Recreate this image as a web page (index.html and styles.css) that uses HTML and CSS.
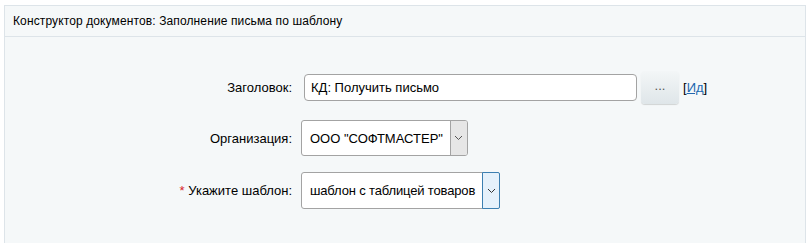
FILE: index.html
```html
<!DOCTYPE html>
<html>
<head>
  <meta charset="UTF-8">
  <title>Конструктор документов</title>
  <link rel="stylesheet" href="styles.css">
</head>
<body>
<div class="panel">
  <div class="panel-head">Конструктор документов: Заполнение письма по шаблону</div>

  <div class="panel-body">
    <div class="form">
      <label class="label">Заголовок:</label>
      <div class="field">
        <input type="text" class="text-input" value="КД: Получить письмо" />
        <button class="dots">...</button>
        <span class="id-link">[<a href="#">Ид</a>]</span>
      </div>

      <label class="label">Организация:</label>
      <div class="field">
        <div class="select">
          <span class="select-value">ООО "СОФТМАСТЕР"</span>
          <span class="select-arrow">
            <svg width="9" height="6" viewBox="0 0 9 6"><path d="M1 1 L4.5 4.5 L8 1" fill="none" stroke="#555" stroke-width="1"/></svg>
          </span>
        </div>
      </div>

      <label class="label"><span class="req">*</span> Укажите шаблон:</label>
      <div class="field">
        <div class="select active">
          <span class="select-value">шаблон с таблицей товаров</span>
          <span class="select-arrow">
            <svg width="9" height="6" viewBox="0 0 9 6"><path d="M1 1 L4.5 4.5 L8 1" fill="none" stroke="#333" stroke-width="1"/></svg>
          </span>
        </div>
      </div>
    </div>
  </div>
</div>
</body>
</html>
```

FILE: styles.css
```css
body {
  margin: 0;
  padding: 5px 4px 0 4px;
  background-color: #fff;
  font-family: "Liberation Sans", Arial, sans-serif;
  color: #000;
}

.panel {
  background-color: #f5f8f9;
  border: 1px solid #dde4e9;
  border-bottom: none;
  height: 238px;
}

.panel-head {
  height: 30px;
  line-height: 30px;
  padding-left: 8px;
  font-size: 12px;
  letter-spacing: 0.12px;
  border-bottom: 1px solid #dde4e9;
}

.panel-body {
  padding-top: 34px;
}

.form {
  display: grid;
  grid-template-columns: 287px auto;
  column-gap: 9px;
  row-gap: 16px;
  align-items: center;
}

.label {
  text-align: right;
  font-size: 13px;
  color: #000;
}

.req {
  color: #d8232a;
}

.field {
  display: flex;
  align-items: center;
}

.text-input {
  width: 333px;
  height: 27px;
  box-sizing: border-box;
  margin: 0 4px 0 3px;
  padding: 0 6px;
  border: 1px solid #a3a3a3;
  border-radius: 4px;
  background-color: #fff;
  font-family: "Liberation Sans", Arial, sans-serif;
  font-size: 13px;
  color: #000;
}

.dots {
  width: 38px;
  height: 33px;
  padding: 0 0 4px 0;
  border: none;
  border-radius: 4px;
  background: linear-gradient(#f3f6f7, #dfe6e9);
  box-shadow: 0 1px 1px rgba(0, 0, 0, 0.15);
  font-family: "Liberation Sans", Arial, sans-serif;
  font-size: 13px;
  color: #555;
}

.id-link {
  margin-left: 4px;
  font-size: 13px;
}

.id-link a {
  color: #2067b0;
}

.select {
  display: flex;
  height: 36px;
  box-sizing: border-box;
  border: 1px solid #a3a3a3;
  border-radius: 3px;
  background-color: #fff;
  font-size: 13px;
}

.select.active {
  height: 37px;
}

.select-value {
  display: flex;
  align-items: center;
  padding: 0 7px 0 8px;
}

.select.active .select-value {
  letter-spacing: -0.15px;
}

.select-arrow {
  display: flex;
  align-items: center;
  justify-content: center;
  width: 16px;
  background-color: #e6e6e6;
  border-left: 1px solid #a3a3a3;
  border-radius: 0 2px 2px 0;
}

.select.active .select-arrow {
  background-color: #e5f1fb;
  border: 1px solid #3c7fb1;
  margin: -1px -1px -1px 0;
}
```
